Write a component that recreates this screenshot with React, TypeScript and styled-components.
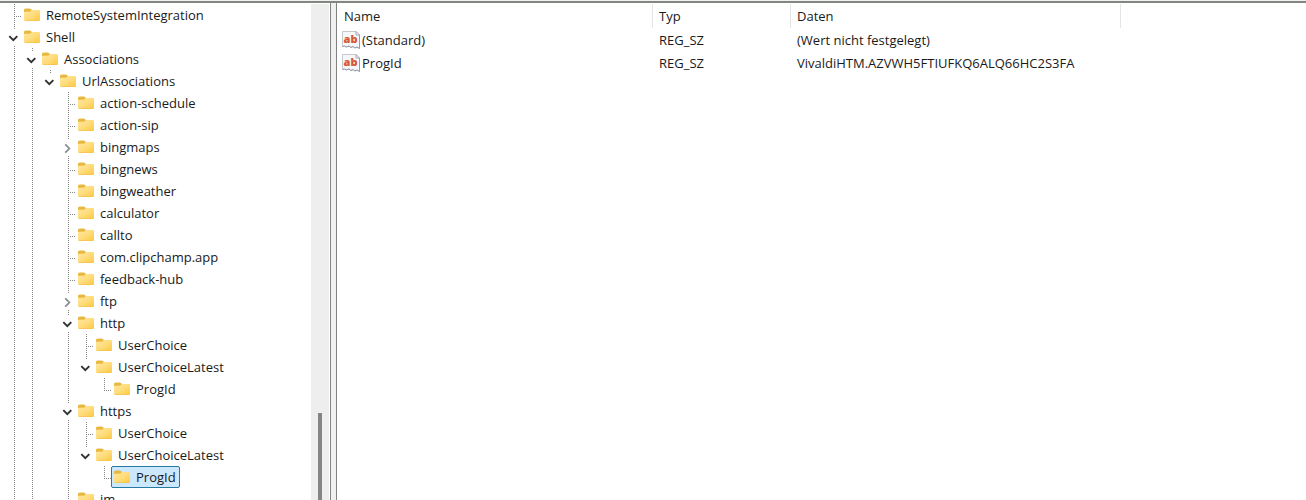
import React from "react";
import styled, { createGlobalStyle, css } from "styled-components";

const GlobalStyle = createGlobalStyle`
  * { box-sizing: border-box; }
  body {
    margin: 0;
    background: #fff;
    color: #1a1a1a;
    font-family: "Open Sans", "Segoe UI", sans-serif;
    font-size: 13px;
    line-height: 20px;
  }
`;

const Window = styled.main`
  display: flex;
  flex-direction: column;
  height: 100vh;
  overflow: hidden;
  padding-top: 1px;
  background: #f0f0f0;
`;

const Panes = styled.div`
  flex: 1;
  min-height: 0;
  display: grid;
  grid-template-columns: 331px minmax(0, 1fr);
  column-gap: 5px;
  border-top: 2px solid #828782;
`;

const TreePane = styled.nav`
  display: flex;
  min-height: 0;
  padding: 1px 1px 0 0;
  background: #fff;
  border-right: 1px solid #828282;
`;

const Tree = styled.ul`
  flex: 1;
  min-width: 0;
  margin: 0;
  padding: 0 0 0 3px;
  overflow: hidden;
  list-style: none;
`;

const TreeRow = styled.li`
  display: flex;
  height: 22px;
`;

const dotsDown = "repeating-linear-gradient(to bottom, #858585 0 1px, transparent 1px 2px)";
const dotsAcross = "repeating-linear-gradient(to right, #858585 0 1px, transparent 1px 2px)";

type GuideKind = "blank" | "line" | "tee" | "elbow";

const guides: Record<GuideKind, ReturnType<typeof css>> = {
  blank: css``,
  line: css`
    background: ${dotsDown} 11px 0 / 1px 22px no-repeat;
  `,
  tee: css`
    background: ${dotsDown} 11px 0 / 1px 22px no-repeat, ${dotsAcross} 11px 12px / 10px 1px no-repeat;
  `,
  elbow: css`
    background: ${dotsDown} 11px 0 / 1px 12px no-repeat, ${dotsAcross} 11px 12px / 10px 1px no-repeat;
  `,
};

const Guide = styled.span<{ $kind: GuideKind }>`
  flex: none;
  width: 18px;
  ${(p) => guides[p.$kind]}
`;

const Expander = styled.button<{ $last: boolean }>`
  flex: none;
  width: 18px;
  padding: 1px 0 0 4px;
  border: 0;
  display: flex;
  align-items: center;
  background: ${dotsDown} 11px 0 / 1px 4px no-repeat,
    ${dotsDown} 11px 20px / 1px ${(p) => (p.$last ? 0 : 2)}px no-repeat,
    ${dotsAcross} 19px 12px / 2px 1px no-repeat;
`;

const Label = styled.a<{ $selected?: boolean }>`
  display: flex;
  align-items: center;
  gap: 6px;
  height: 22px;
  padding: 0 3px 0 2px;
  border: 1px solid ${(p) => (p.$selected ? "#26799f" : "transparent")};
  border-radius: 2px;
  background: ${(p) => (p.$selected ? "#cce8ff" : "transparent")};
  color: inherit;
  text-decoration: none;
  white-space: nowrap;
`;

const Icon = styled.svg`
  flex: none;
  display: block;
`;

const ScrollTrack = styled.div`
  flex: none;
  width: 18px;
  display: flex;
  flex-direction: column;
  justify-content: flex-end;
  align-items: center;
  background: #eee;
`;

const ScrollThumb = styled.div`
  width: 4px;
  height: 17.5%;
  background: #858585;
`;

const ListPane = styled.section`
  min-width: 0;
  padding-top: 1px;
  overflow: hidden;
  background: #fff;
  border-left: 1px solid #828282;
`;

const ValueTable = styled.table`
  width: 100%;
  table-layout: fixed;
  border-collapse: separate;
  border-spacing: 0;
`;

const Column = styled.col<{ $width?: number }>`
  width: ${(p) => (p.$width ? `${p.$width}px` : "auto")};
`;

const HeaderCell = styled.th`
  height: 24px;
  padding: 0 0 0 6px;
  border-right: 1px solid #e5e5e5;
  font-weight: 400;
  text-align: left;

  &:first-child {
    padding-left: 7px;
  }

  &:last-child {
    border-right: 0;
  }
`;

const Cell = styled.td`
  height: 23px;
  padding: 0 0 0 6px;
  white-space: nowrap;

  &:first-child {
    padding-left: 5px;
  }
`;

const ValueName = styled.span`
  display: flex;
  align-items: center;
  gap: 2px;
`;

const FolderIcon = () => (
  <Icon width="16" height="16" viewBox="0 0 16 16" aria-hidden="true">
    <defs>
      <linearGradient id="folderFront" x1="0" y1="0" x2="1" y2="1">
        <stop offset="0" stopColor="#ffe8a2" />
        <stop offset="0.5" stopColor="#ffdc7c" />
        <stop offset="1" stopColor="#fcc940" />
      </linearGradient>
    </defs>
    <path d="M0 3Q0 1.500 1.500 1.500H5.500Q6.500 1.500 7.200 2.300L8 3.200V6H0Z" fill="#e8b940" />
    <path d="M0 5.500Q0 4.800 1 4.800H5.500Q6.300 4.800 6.900 4.100L7.300 3.600Q7.800 3 8.600 3H14.700Q16 3 16 4.300V12.700Q16 14 14.700 14H1.300Q0 14 0 12.700Z" fill="url(#folderFront)" />
    <path d="M.8 13.500H15.200" stroke="#f0be4a" strokeWidth="1" strokeOpacity=".6" />
  </Icon>
);

const Chevron = ({ open }: { open: boolean }) => (
  <Icon width="12" height="12" viewBox="0 0 12 12" fill="none" aria-hidden="true">
    {open ? (
      <path d="M2.300 4.200L6.300 8.200L10.300 4.200" stroke="#303030" strokeWidth="1.900" />
    ) : (
      <path d="M4.200 2.300L8.400 6.500L4.200 10.700" stroke="#8b8992" strokeWidth="1.700" />
    )}
  </Icon>
);

const StringValueIcon = () => (
  <Icon width="18" height="18" viewBox="0 0 18 18" aria-hidden="true">
    <path d="M.5.5H14L17.5 4V17.5L15 16L13 17L11 15.500L9 16.500L7 15L4 16L2.500 15L.5 15.500Z" fill="#f6f7fa" stroke="#c6cad0" />
    <path d="M17.500 4V17.500L15 16L13 17L11 15.500L9 16.500L7 15L4 16L2.500 15L.5 15.500" fill="none" stroke="#989ca4" />
    <path d="M14 .5V4H17.500Z" fill="#fff" stroke="#a5a8ae" />
    <text x="8.500" y="12" textAnchor="middle" fontFamily="Open Sans" fontSize="11" fontWeight="800" fill="#d9573a">ab</text>
  </Icon>
);

interface Node {
  name: string;
  guides: GuideKind[];
  open?: boolean;
  last?: boolean;
  selected?: boolean;
}

const top: GuideKind[] = ["line", "line", "blank"];

const leaf = (name: string): Node => ({ name, guides: [...top, "tee"] });

const choices = (selected: boolean): Node[] => [
  { name: "UserChoice", guides: [...top, "line", "tee"] },
  { name: "UserChoiceLatest", guides: [...top, "line"], open: true, last: true },
  { name: "ProgId", guides: [...top, "line", "blank", "elbow"], selected },
];

const nodes: Node[] = [
  { name: "RemoteSystemIntegration", guides: ["tee"] },
  { name: "Shell", guides: [], open: true },
  { name: "Associations", guides: ["line"], open: true },
  { name: "UrlAssociations", guides: ["line", "line"], open: true, last: true },
  leaf("action-schedule"),
  leaf("action-sip"),
  { name: "bingmaps", guides: top, open: false },
  leaf("bingnews"),
  leaf("bingweather"),
  leaf("calculator"),
  leaf("callto"),
  leaf("com.clipchamp.app"),
  leaf("feedback-hub"),
  { name: "ftp", guides: top, open: false },
  { name: "http", guides: top, open: true },
  ...choices(false),
  { name: "https", guides: top, open: true },
  ...choices(true),
  leaf("im"),
];

const values = [
  { name: "(Standard)", type: "REG_SZ", data: "(Wert nicht festgelegt)" },
  { name: "ProgId", type: "REG_SZ", data: "VivaldiHTM.AZVWH5FTIUFKQ6ALQ66HC2S3FA" },
];

export default function App() {
  return (
    <>
      <GlobalStyle />
      <Window>
        <Panes>
          <TreePane>
            <Tree>
              {nodes.map((node, i) => (
                <TreeRow key={i}>
                  {node.guides.map((kind, level) => (
                    <Guide key={level} $kind={kind} />
                  ))}
                  {node.open !== undefined && (
                    <Expander type="button" $last={!!node.last} aria-expanded={node.open} aria-label={node.name}>
                      <Chevron open={node.open} />
                    </Expander>
                  )}
                  <Label href="#" $selected={node.selected}>
                    <FolderIcon />
                    {node.name}
                  </Label>
                </TreeRow>
              ))}
            </Tree>
            <ScrollTrack>
              <ScrollThumb />
            </ScrollTrack>
          </TreePane>
          <ListPane>
            <ValueTable>
              <colgroup>
                <Column $width={316} />
                <Column $width={138} />
                <Column $width={330} />
                <Column />
              </colgroup>
              <thead>
                <tr>
                  <HeaderCell scope="col">Name</HeaderCell>
                  <HeaderCell scope="col">Typ</HeaderCell>
                  <HeaderCell scope="col">Daten</HeaderCell>
                  <HeaderCell as="td" />
                </tr>
              </thead>
              <tbody>
                {values.map((value) => (
                  <tr key={value.name}>
                    <Cell>
                      <ValueName>
                        <StringValueIcon />
                        {value.name}
                      </ValueName>
                    </Cell>
                    <Cell>{value.type}</Cell>
                    <Cell>{value.data}</Cell>
                    <Cell />
                  </tr>
                ))}
              </tbody>
            </ValueTable>
          </ListPane>
        </Panes>
      </Window>
    </>
  );
}
